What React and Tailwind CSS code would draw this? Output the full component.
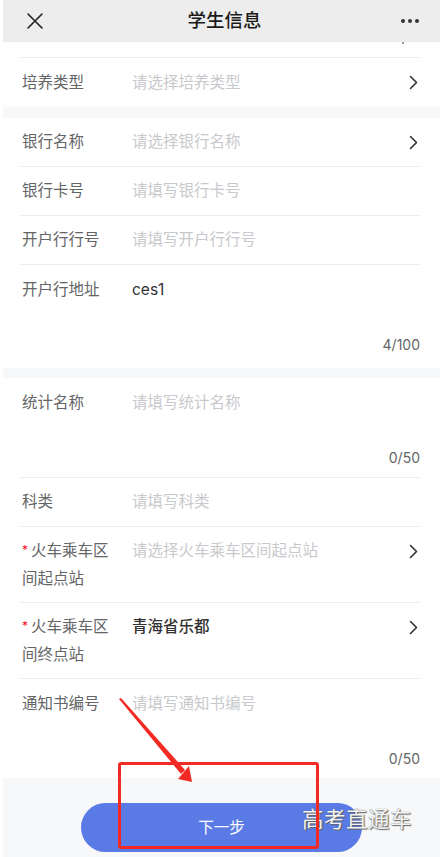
import React from "react";

const font = "font-['Inter','Noto_Sans_CJK_SC',sans-serif]";

function Chevron() {
    return (
        <svg width="9" height="15" viewBox="0 0 9 15" fill="none" className="shrink-0">
            <path d="M1.5 1.5 L7.5 7.5 L1.5 13.5" stroke="#323233" strokeWidth="1.6" strokeLinecap="round" strokeLinejoin="round" />
        </svg>
    );
}

function Field({ label, placeholder, value, arrow, last }) {
    return (
        <div className="pl-[17px] pr-[20px]">
            <div className={"h-[49px] flex items-center px-[2px] " + (last ? "" : "border-b border-[#ebedf0]")}>
                <div className="w-[110px] shrink-0 text-[15.5px] text-[#646566]">{label}</div>
                <div className={"flex-1 text-[15.5px] " + (value ? "text-[#323233]" : "text-[#c8c9cc]")}>
                    {value || placeholder}
                </div>
                {arrow && <Chevron />}
            </div>
        </div>
    );
}

// required label that wraps onto two lines
function WrapField({ line1, line2, placeholder, value }) {
    return (
        <div className="pl-[17px] pr-[20px]">
            <div className="h-[76px] flex items-start py-[10px] px-[2px] border-b border-[#ebedf0]">
                <div className="w-[110px] shrink-0 text-[15.5px] leading-[28px] text-[#646566]">
                    <div className="flex items-center">
                        <span className="w-[9px] text-[#ee0a24] text-[12px] leading-[12px] -mt-[2px]">*</span>
                        <span>{line1}</span>
                    </div>
                    <div>{line2}</div>
                </div>
                <div className={"flex-1 text-[15.5px] leading-[28px] " + (value ? "text-[#323233] font-medium" : "text-[#c8c9cc]")}>
                    {value || placeholder}
                </div>
                <div className="h-[28px] flex items-center">
                    <Chevron />
                </div>
            </div>
        </div>
    );
}

function AreaField({ label, placeholder, value, count, height, border }) {
    return (
        <div className="pl-[17px] pr-[20px]">
            <div className={"flex flex-col pt-[13px] pl-[2px] " + height + (border ? " border-b border-[#ebedf0]" : "")}>
                <div className="flex h-[24px] items-center">
                    <div className="w-[110px] shrink-0 text-[15.5px] text-[#646566]">{label}</div>
                    <div className={"flex-1 text-[15.5px] " + (value ? "text-[#323233]" : "text-[#c8c9cc]")}>
                        {value || placeholder}
                    </div>
                </div>
                <div className="mt-[33px] h-[20px] text-right text-[14px] leading-[20px] text-[#646566]">{count}</div>
            </div>
        </div>
    );
}

export default function App() {
    return (
        <div className={"relative w-[440px] h-[857px] overflow-hidden bg-white pl-[3px] " + font}>
            <div className="h-[42px] bg-[#ededed] flex items-center justify-between pl-[23px] pr-[21px]">
                <svg width="18" height="18" viewBox="0 0 18 18" fill="none">
                    <path d="M2 2 L16 16 M16 2 L2 16" stroke="#222" strokeWidth="1.6" strokeLinecap="round" />
                </svg>
                <div className="text-[18.5px] font-medium text-[#1a1a1a] ml-[4px]">学生信息</div>
                <div className="flex gap-[3px]">
                    <span className="w-[4px] h-[4px] rounded-full bg-[#333]" />
                    <span className="w-[4px] h-[4px] rounded-full bg-[#333]" />
                    <span className="w-[4px] h-[4px] rounded-full bg-[#333]" />
                </div>
            </div>
            <div className="pl-[17px] pr-[20px]">
                <div className="h-[16px] border-b border-[#ebedf0] flex justify-end pr-[16px]">
                    <span className="w-[2px] h-[2px] bg-[#999]" />
                </div>
            </div>
            <Field label="培养类型" placeholder="请选择培养类型" arrow last />
            <div className="h-[11px] bg-[#f7f8fa]" />

            <Field label="银行名称" placeholder="请选择银行名称" arrow />
            <Field label="银行卡号" placeholder="请填写银行卡号" />
            <Field label="开户行行号" placeholder="请填写开户行行号" />
            <AreaField label="开户行地址" value="ces1" count="4/100" height="h-[103px]" />
            <div className="h-[10px] bg-[#f7f8fa]" />

            <AreaField label="统计名称" placeholder="请填写统计名称" count="0/50" height="h-[100px]" border />
            <Field label="科类" placeholder="请填写科类" />
            <WrapField line1="火车乘车区" line2="间起点站" placeholder="请选择火车乘车区间起点站" />
            <WrapField line1="火车乘车区" line2="间终点站" value="青海省乐都" />
            <AreaField label="通知书编号" placeholder="请填写通知书编号" count="0/50" height="h-[99px]" />

            <div className="h-[79px] bg-[#f7f8fa] pt-[25px] pl-[78px]">
                <div className="w-[281px] h-[49px] rounded-full bg-[#5a7be6] flex items-center justify-center text-white text-[15.5px]">
                    下一步
                </div>
            </div>

            <div className="absolute left-[302px] top-[803px] text-[21.5px] text-[#f4f4f4] tracking-[0.5px] [text-shadow:0_0_1px_#555,1px_1px_1px_#666]">
                高考直通车
            </div>

            <div className="absolute left-[118px] top-[762px] w-[201px] h-[87px] border-[3px] border-[#f32a24] rounded-[3px]" />

            <svg className="absolute left-0 top-0" width="440" height="857" viewBox="0 0 440 857">
                <polygon points="119,699 121,698 185,770 181,774" fill="#f32a24" />
                <polygon points="192,782 178,779 189,766" fill="#f32a24" />
            </svg>
        </div>
    );
}
